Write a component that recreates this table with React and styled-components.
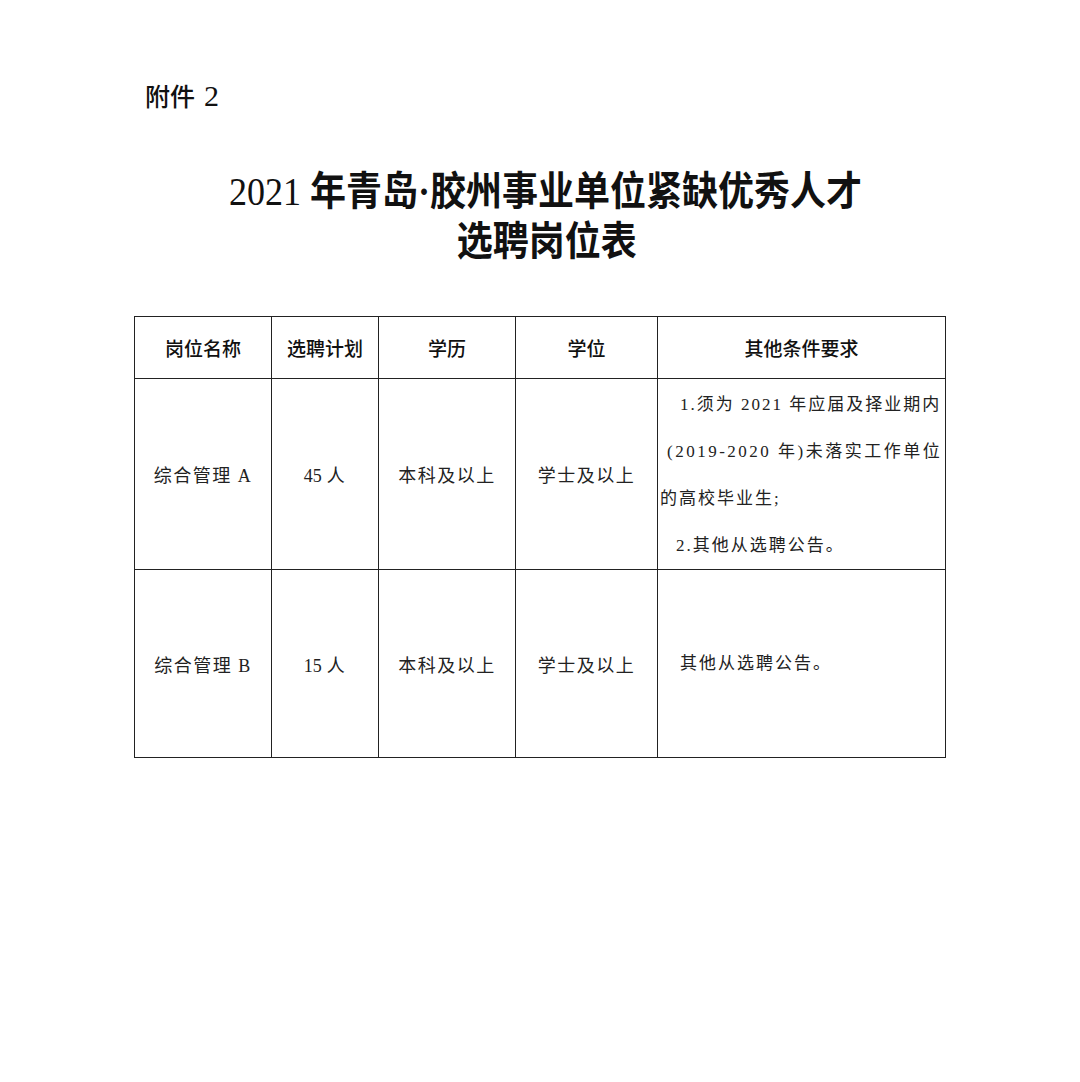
import React from "react";
import styled, { createGlobalStyle } from "styled-components";

const GlobalStyle = createGlobalStyle`
  html, body {
    margin: 0;
    padding: 0;
    background: #ffffff;
  }
  body {
    font-family: "Liberation Serif", "Noto Sans CJK SC", serif;
    color: #1a1a1a;
  }
`;

const Page = styled.div`
  width: 1080px;
  min-height: 1082px;
  background: #fff;
  padding-top: 78px;
  box-sizing: border-box;
`;

const Attachment = styled.div`
  padding-left: 145px;
  font-size: 25px;
  line-height: 34px;
  color: #111;
  span {
    font-family: "Noto Sans CJK SC", sans-serif;
    font-weight: 500;
  }
  b {
    font-weight: 400;
    font-size: 30px;
    margin-left: 9px;
  }
`;

const Title = styled.h1`
  margin: 52px 0 0 0;
  padding-left: 11px;
  text-align: center;
  font-family: "Liberation Serif", "Noto Sans CJK SC", serif;
  font-weight: 700;
  font-size: 40px;
  line-height: 50px;
  color: #111;
`;

const TitleLine = styled.div`
  padding-left: ${(p) => p.$shift || 0}px;
  transform: scaleX(0.9);
  white-space: nowrap;
  span {
    font-weight: 400;
  }
`;

const Table = styled.table`
  margin: 49px 0 0 134px;
  width: 811px;
  border-collapse: collapse;
  table-layout: fixed;
`;

const Head = styled.th`
  width: ${(p) => p.$w}px;
  height: 61px;
  border: 1px solid #222;
  font-family: "Noto Sans CJK SC", sans-serif;
  font-weight: 500;
  font-size: 19px;
  color: #111;
  text-align: center;
  vertical-align: middle;
  padding: 0;
`;

const Cell = styled.td`
  height: ${(p) => p.$h}px;
  border: 1px solid #222;
  font-family: "Liberation Serif", "Noto Sans CJK SC", serif;
  font-weight: 400;
  font-size: 18px;
  letter-spacing: 1.5px;
  color: #222;
  text-align: center;
  vertical-align: middle;
  padding: 0;
`;

const Num = styled.span`
  letter-spacing: 0;
  margin-right: 5px;
`;

const NoteCell = styled(Cell)`
  text-align: left;
  font-size: 17px;
  vertical-align: ${(p) => (p.$top ? "top" : "middle")};
  padding-top: ${(p) => (p.$top ? 2 : 0)}px;
`;

const NoteLine = styled.div`
  line-height: 47px;
  height: 47px;
  white-space: nowrap;
  padding-left: ${(p) => p.$indent || 0}px;
  letter-spacing: ${(p) => p.$spacing || 2}px;
`;

const rows = [
  { name: "综合管理 A", plan: "45", h: 188 },
  { name: "综合管理 B", plan: "15", h: 187 },
];

export default function App() {
  return (
    <Page>
      <GlobalStyle />
      <Attachment>
        <span>附件</span>
        <b>2</b>
      </Attachment>
      <Title>
        <TitleLine>
          <span>2021</span> 年青岛·胶州事业单位紧缺优秀人才
        </TitleLine>
        <TitleLine $shift={3}>选聘岗位表</TitleLine>
      </Title>
      <Table>
        <thead>
          <tr>
            <Head $w={136}>岗位名称</Head>
            <Head $w={106}>选聘计划</Head>
            <Head $w={136}>学历</Head>
            <Head $w={141}>学位</Head>
            <Head $w={287}>其他条件要求</Head>
          </tr>
        </thead>
        <tbody>
          {rows.map((r, i) => (
            <tr key={r.name}>
              <Cell $h={r.h}>{r.name}</Cell>
              <Cell $h={r.h}>
                <Num>{r.plan}</Num>人
              </Cell>
              <Cell $h={r.h}>本科及以上</Cell>
              <Cell $h={r.h}>学士及以上</Cell>
              {i === 0 ? (
                <NoteCell $h={r.h} $top>
                  <NoteLine $indent={22}>1.须为 2021 年应届及择业期内</NoteLine>
                  <NoteLine $indent={9} $spacing={2.5}>
                    (2019-2020 年)未落实工作单位
                  </NoteLine>
                  <NoteLine $indent={2}>的高校毕业生;</NoteLine>
                  <NoteLine $indent={18}>2.其他从选聘公告。</NoteLine>
                </NoteCell>
              ) : (
                <NoteCell $h={r.h}>
                  <NoteLine $indent={22}>其他从选聘公告。</NoteLine>
                </NoteCell>
              )}
            </tr>
          ))}
        </tbody>
      </Table>
    </Page>
  );
}
